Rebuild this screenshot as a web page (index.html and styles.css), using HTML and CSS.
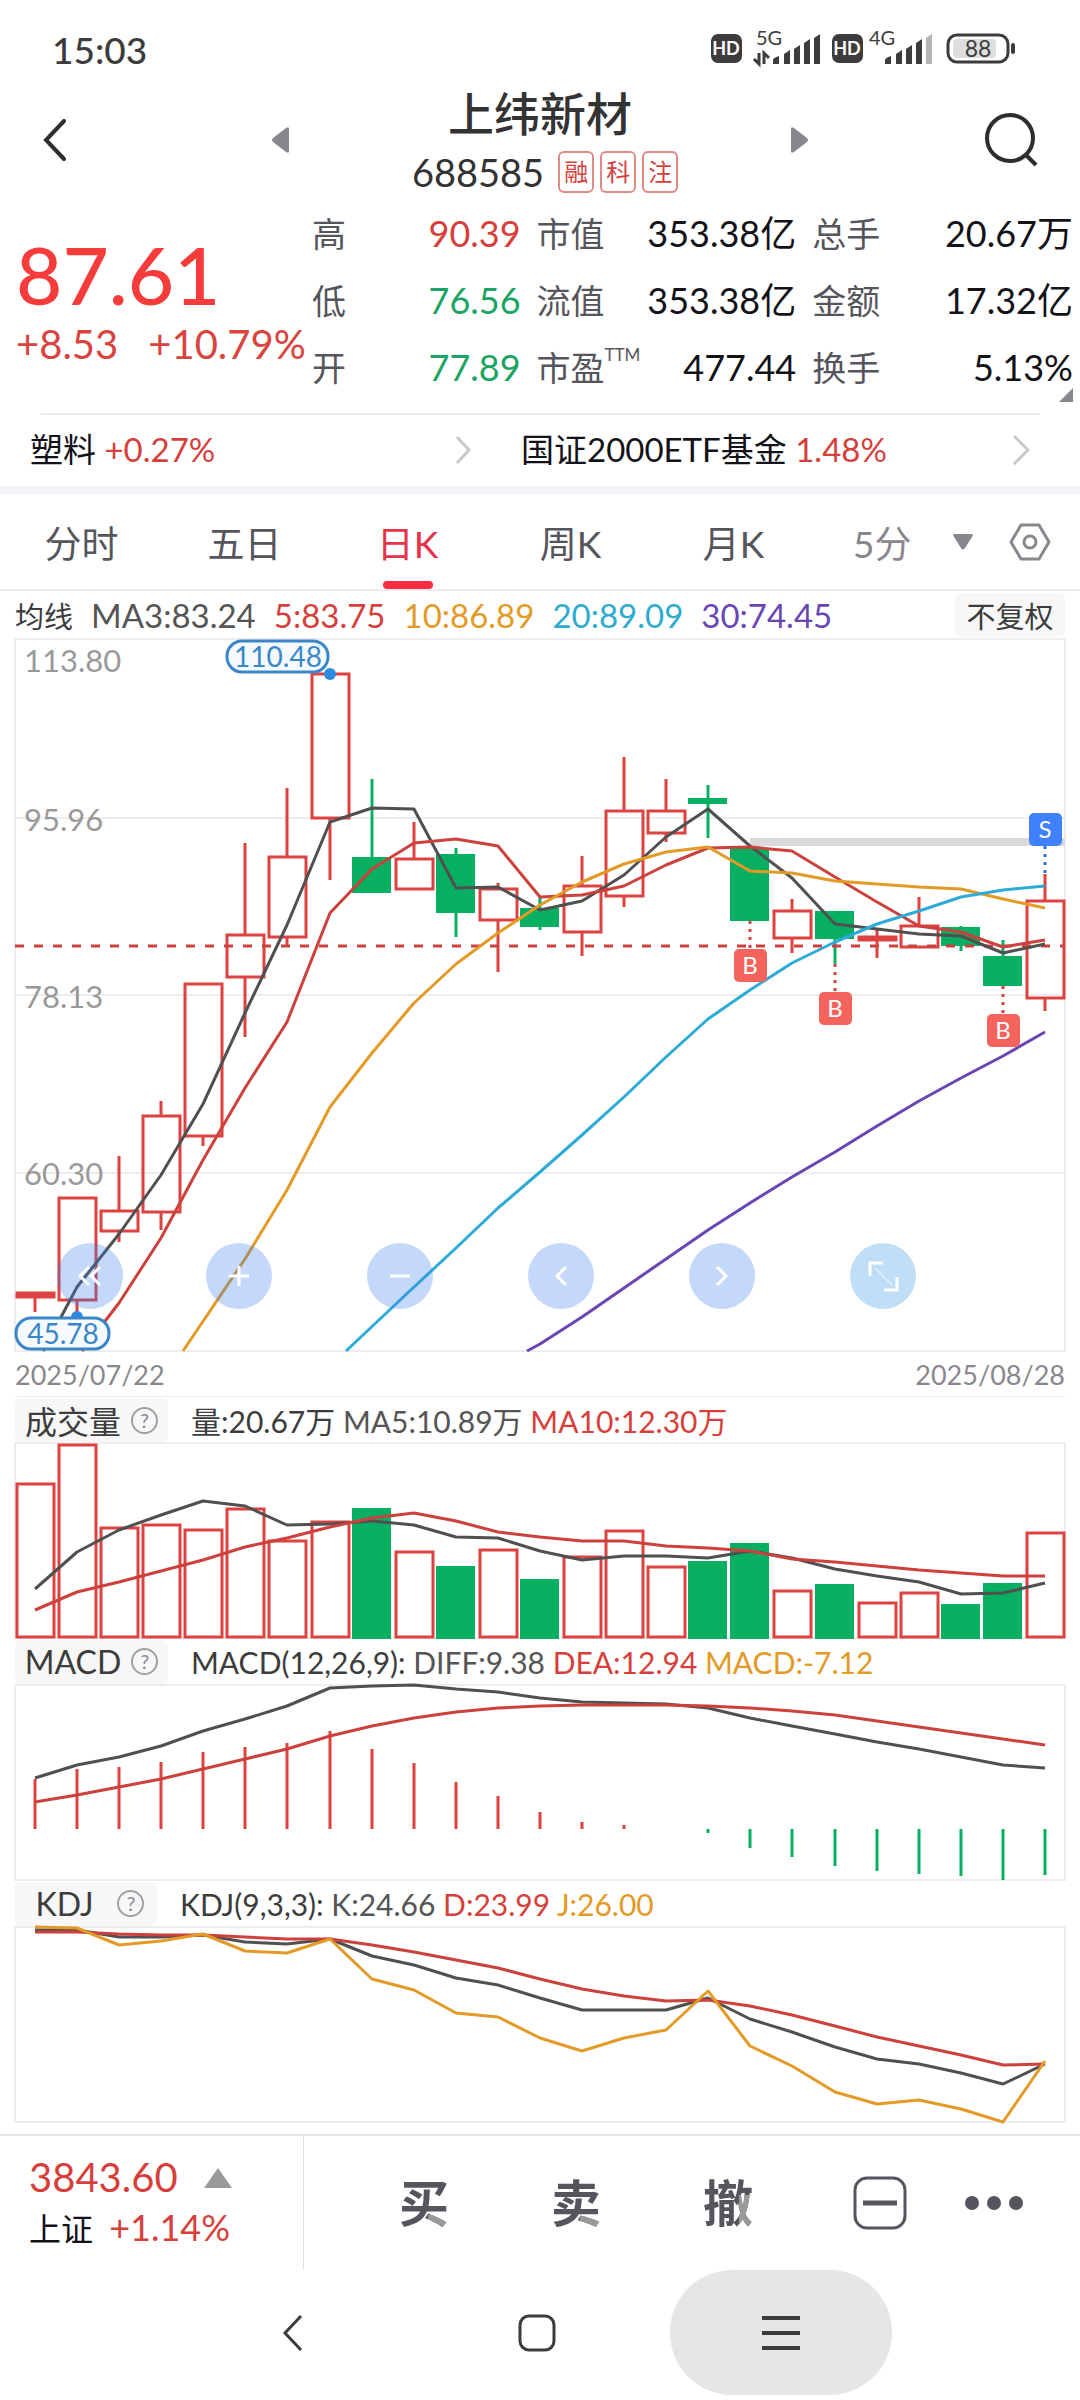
FILE: index.html
```html
<!DOCTYPE html>
<html lang="zh-CN">
<head>
<meta charset="utf-8">
<meta name="viewport" content="width=device-width, initial-scale=1">
<title>上纬新材 688585</title>
<link rel="stylesheet" href="styles.css">
</head>
<body>
<div class="status">
  <span class="clock">15:03</span>
  <svg class="status-icons" width="306" height="46" viewBox="0 0 306 46" aria-hidden="true">
    <g fill="#3c3c3c">
      <rect x="1" y="8" width="31" height="29" rx="7"/>
      <rect x="122" y="8" width="31" height="29" rx="7"/>
    </g>
    <g class="hd"><text x="16" y="29">HD</text><text x="137" y="29">HD</text></g>
    <g class="net"><text x="46" y="19">5G</text><text x="159" y="19">4G</text></g>
    <g fill="none" stroke="#3c3c3c" stroke-width="3"><path d="M49 27v11l-5-5M54 38V27l5 5"/></g>
    <g fill="#3c3c3c">
      <path d="M63 34q0-2 6-4v8h-6zM74 28l6-4v14h-6zM84 23l6-4v19h-6zM94 17l6-4v25h-6zM104 12l6-4v30h-6z"/>
      <path d="M175 34q0-2 6-4v8h-6zM186 28l6-4v14h-6zM196 23l6-4v19h-6zM206 17l6-4v25h-6z"/>
      <path d="M216 12l6-4v30h-6z" fill="#b4b4b4"/>
    </g>
    <rect x="238" y="9" width="60" height="27" rx="9" fill="none" stroke="#3c3c3c" stroke-width="3"/>
    <rect x="243" y="13" width="43" height="19" rx="4" fill="#dedede"/>
    <path d="M303 19v7" stroke="#3c3c3c" stroke-width="4" stroke-linecap="round"/>
    <text class="batt" x="268" y="31">88</text>
  </svg>
</div>

<header class="header">
  <button class="icon-btn back" aria-label="返回"><svg width="26" height="42" viewBox="0 0 26 42"><path d="M22 2L4 21l18 19" fill="none" stroke="#2e2e2e" stroke-width="4" stroke-linecap="round"/></svg></button>
  <button class="icon-btn step" aria-label="上一只"><svg width="18" height="26" viewBox="0 0 18 26"><path d="M18 2v22q0 3-3 1L2 15q-2-2 0-4L15 1q3-2 3 1z" fill="#88878e"/></svg></button>
  <div class="title">
    <h1>上纬新材</h1>
    <div class="code"><span>688585</span><i class="tag">融</i><i class="tag">科</i><i class="tag">注</i></div>
  </div>
  <button class="icon-btn step" aria-label="下一只"><svg width="18" height="26" viewBox="0 0 18 26"><path d="M0 2v22q0 3 3 1L16 15q2-2 0-4L3 1Q0-1 0 2z" fill="#88878e"/></svg></button>
  <button class="icon-btn search" aria-label="搜索"><svg width="54" height="56" viewBox="0 0 54 56"><g fill="none" stroke="#2e2e2e" stroke-width="4"><circle cx="26" cy="26" r="23"/><path d="M41 42l11 11"/></g></svg></button>
</header>

<section class="quote">
  <div class="price">
    <strong>87.61</strong>
    <p><span>+8.53</span><span>+10.79%</span></p>
  </div>
  <dl class="stats">
    <div><dt>高</dt><dd class="up">90.39</dd></div>
    <div><dt>市值</dt><dd>353.38亿</dd></div>
    <div><dt>总手</dt><dd>20.67万</dd></div>
    <div><dt>低</dt><dd class="down">76.56</dd></div>
    <div><dt>流值</dt><dd>353.38亿</dd></div>
    <div><dt>金额</dt><dd>17.32亿</dd></div>
    <div><dt>开</dt><dd class="down">77.89</dd></div>
    <div><dt>市盈<sup>TTM</sup></dt><dd>477.44</dd></div>
    <div><dt>换手</dt><dd>5.13%</dd></div>
  </dl>
  <span class="corner"></span>
</section>

<nav class="related">
  <a href="#"><span>塑料 <b>+0.27%</b></span><svg width="18" height="30" viewBox="0 0 18 30"><path d="M3 2l12 13L3 28" fill="none" stroke="#c8c8cc" stroke-width="3"/></svg></a>
  <a href="#"><span>国证2000ETF基金 <b>1.48%</b></span><svg width="18" height="30" viewBox="0 0 18 30"><path d="M2 1l14 14L2 29" fill="none" stroke="#c8c8cc" stroke-width="3"/></svg></a>
</nav>

<nav class="tabs">
  <button>分时</button>
  <button>五日</button>
  <button class="active">日K</button>
  <button>周K</button>
  <button>月K</button>
  <div class="tabs-more">
    <button class="muted">5分 <svg width="20" height="16" viewBox="0 0 20 16"><path d="M2 0h16q3 0 1 3l-7 11q-2 3-4 0L1 3Q-1 0 2 0z" fill="#88878e"/></svg></button>
    <button aria-label="设置"><svg width="42" height="38" viewBox="0 0 42 38"><g fill="none" stroke="#88878e" stroke-width="3"><path d="M12 2h18l10 17-10 17H12L2 19z" stroke-linejoin="round"/><circle cx="21" cy="19" r="6"/></g></svg></button>
  </div>
</nav>

<main class="charts">
  <div class="ma-row">
    <span class="name">均线</span>
    <span class="dark">MA3:83.24</span>
    <span class="red">5:83.75</span>
    <span class="orange">10:86.89</span>
    <span class="cyan">20:89.09</span>
    <span class="purple">30:74.45</span>
    <button class="adjust">不复权</button>
  </div>

  <div class="price-chart">
    <svg id="kline" class="plot" viewBox="0 639 1050 712"></svg>
    <div class="tools">
      <button aria-label="最左"><svg viewBox="0 0 66 66"><path d="M32 24l-9 9 9 9M43 24l-9 9 9 9"/></svg></button>
      <button aria-label="放大"><svg viewBox="0 0 66 66"><path d="M23 33h20M33 23v20"/></svg></button>
      <button aria-label="缩小"><svg viewBox="0 0 66 66"><path d="M23 33h20"/></svg></button>
      <button aria-label="左移"><svg viewBox="0 0 66 66"><path d="M38 24l-9 9 9 9"/></svg></button>
      <button aria-label="右移"><svg viewBox="0 0 66 66"><path d="M28 24l9 9-9 9"/></svg></button>
      <button class="full" aria-label="全屏"><svg viewBox="0 0 66 66"><path d="M20 33V20h13M47 34v13H34"/><path class="thin" d="M25 25l17 17"/></svg></button>
    </div>
  </div>
  <div class="dates"><time>2025/07/22</time><time>2025/08/28</time></div>

  <div class="ind first">
    <button class="ind-name">成交量 <span class="help">?</span></button>
    <p><span class="ink">量:20.67万</span> <span class="dark">MA5:10.89万</span> <span class="red">MA10:12.30万</span></p>
  </div>
  <svg id="volume" class="plot" viewBox="0 1443 1050 195"></svg>

  <div class="ind">
    <button class="ind-name">MACD <span class="help">?</span></button>
    <p><span class="ink">MACD(12,26,9):</span> <span class="dark">DIFF:9.38</span> <span class="red">DEA:12.94</span> <span class="orange">MACD:-7.12</span></p>
  </div>
  <svg id="macd" class="plot" viewBox="0 1685 1050 195"></svg>

  <div class="ind">
    <button class="ind-name kdj">KDJ <span class="help">?</span></button>
    <p><span class="ink">KDJ(9,3,3):</span> <span class="dark">K:24.66</span> <span class="red">D:23.99</span> <span class="orange">J:26.00</span></p>
  </div>
  <svg id="kdj" class="plot" viewBox="0 1927 1050 195"></svg>
</main>

<footer class="trade">
  <a class="index" href="#">
    <span class="index-value">3843.60 <svg width="28" height="20" viewBox="0 0 28 20"><path d="M14 0l14 20H0z" fill="#999"/></svg></span>
    <span class="index-name">上证 <b>+1.14%</b></span>
  </a>
  <div class="actions">
    <button><span class="glyph">买</span></button>
    <button><span class="glyph">卖</span></button>
    <button><span class="glyph side">撤</span></button>
    <button aria-label="收起"><svg width="54" height="54" viewBox="0 0 54 54"><rect x="2" y="2" width="50" height="50" rx="12" fill="none" stroke="#55555e" stroke-width="3"/><path d="M10 27h34" stroke="#55555e" stroke-width="5"/></svg></button>
    <button aria-label="更多"><svg width="60" height="16" viewBox="0 0 60 16"><g fill="#55555e"><circle cx="8" cy="8" r="7"/><circle cx="30" cy="8" r="7"/><circle cx="52" cy="8" r="7"/></g></svg></button>
  </div>
</footer>

<nav class="sysnav">
  <button aria-label="后退"><svg width="22" height="38" viewBox="0 0 22 38"><path d="M19 2L3 19l16 17" fill="none" stroke="#3c3c3c" stroke-width="3"/></svg></button>
  <button aria-label="主屏"><svg width="38" height="38" viewBox="0 0 38 38"><rect x="2" y="2" width="34" height="34" rx="9" fill="none" stroke="#3c3c3c" stroke-width="3"/></svg></button>
  <button class="pressed" aria-label="最近任务"><svg width="38" height="36" viewBox="0 0 38 36"><path d="M0 3h38M0 18h38M0 33h38" stroke="#3c3c3c" stroke-width="4"/></svg></button>
</nav>
<script src="charts.js"></script>
</body>
</html>
```
FILE: styles.css
```css
* { box-sizing: border-box; }
body {
  margin: 0;
  background: #fff;
  color: #121218;
  font-family: Lato, "Noto Sans CJK SC", sans-serif;
}
button {
  border: 0;
  padding: 0;
  background: none;
  color: inherit;
  font: inherit;
  display: flex;
  align-items: center;
  justify-content: center;
}
a { color: inherit; text-decoration: none; }
b, i { font-weight: 400; font-style: normal; }
p, dl, dd, h1 { margin: 0; }
svg { flex: none; }

.up, .red, b { color: #d63f3b; }
.down { color: #1ba464; }
.ink { color: #3c3c3c; }
.dark { color: #555; }
.orange { color: #e39a26; }
.cyan { color: #2dabd0; }
.purple { color: #6a45b4; }

/* status bar */
.status {
  height: 80px;
  padding: 18px 64px 0 52px;
  display: flex;
  align-items: center;
  justify-content: space-between;
}
.clock { font-size: 37px; color: #3c3c3c; font-weight: 500; }
.hd { fill: #fff; font-size: 18px; font-weight: 700; text-anchor: middle; }
.net { fill: #3c3c3c; font-size: 20px; }
.batt { fill: #3c3c3c; font-size: 23px; text-anchor: middle; }

/* header */
.header {
  height: 120px;
  display: grid;
  grid-template-columns: 190fr 180fr 340fr 180fr 190fr;
  align-items: center;
}
.back { justify-content: flex-start; padding-left: 42px; }
.search { justify-content: flex-end; padding-right: 42px; }
.title { text-align: center; color: #333; }
.title h1 { font-size: 46px; line-height: 64px; font-weight: 500; }
.code { display: flex; justify-content: center; align-items: center; gap: 6px; font-size: 38px; line-height: 52px; padding-left: 10px; }
.code span { margin-right: 8px; }
.tag { width: 36px; height: 42px; border: 2px solid #e08a88; border-radius: 6px; color: #d63f3b; font-size: 24px; line-height: 38px; }

/* quote */
.quote { position: relative; display: grid; grid-template-columns: 314fr 766fr; padding: 0 7px 12px 0; }
.price { padding: 32px 0 0 16px; color: #f63c3a; }
.price strong { display: block; font-size: 80px; line-height: 84px; font-weight: 500; }
.price p { display: flex; gap: 30px; font-size: 40px; line-height: 56px; color: #d9443f; white-space: nowrap; }
.stats { display: grid; grid-template-columns: 208fr 259fr 260fr; column-gap: 16px; }
.stats div { display: flex; justify-content: space-between; align-items: center; height: 67px; font-size: 36px; line-height: 67px; white-space: nowrap; }
.stats dt { color: #55555c; font-size: 34px; }
.stats sup { font-size: 17px; line-height: 20px; vertical-align: 20px; }
.corner { position: absolute; right: 7px; bottom: 11px; border: 7px solid #88878e; border-top-color: transparent; border-left-color: transparent; }

.related { display: grid; grid-template-columns: 488fr 512fr; margin: 0 50px 0 30px; position: relative; font-size: 33px; line-height: 73px; }
.related::before { content: ""; position: absolute; inset: 0 -10px auto 11px; border-top: 2px solid #ededf0; }
.related a { display: flex; justify-content: space-between; align-items: center; }
.related a:first-child { padding-right: 46px; }
.related a:last-child { padding-left: 3px; }

/* period tabs */
.tabs { display: grid; grid-template-columns: repeat(5, 163fr) 265fr; height: 105px; border-top: 8px solid #f2f2f7; border-bottom: 2px solid #ededf0; font-size: 37px; color: #55555c; }
.tabs .active { position: relative; color: #e4334a; }
.active::after { content: ""; position: absolute; left: 50%; bottom: 0; width: 50px; height: 8px; margin-left: -25px; border-radius: 4px; background: #fa2b42; }
.tabs-more { display: flex; justify-content: space-between; padding: 0 29px 0 38px; }
.tabs-more .muted { gap: 42px; color: #88878e; }

/* charts */
.charts { padding: 0 15px 12px; }
.ma-row { display: flex; align-items: center; gap: 18px; height: 48px; font-size: 33px; white-space: nowrap; }
.name { font-size: 29px; color: #3c3c3c; }
.adjust { margin-left: auto; width: 110px; height: 44px; border-radius: 6px; background: #f7f7f7; color: #3c3c3c; font-size: 29px; }
.price-chart { position: relative; }
.plot { display: block; width: 100%; height: auto; overflow: visible; }
.tools { position: absolute; left: 4%; right: 14%; bottom: 42px; display: grid; grid-template-columns: 149fr 160fr 161fr 161fr 160fr 68fr; }
.tools button { width: 66px; height: 66px; border-radius: 50%; background: rgba(59, 130, 235, 0.3); }
.tools svg { width: 66px; fill: none; stroke: #fff; stroke-width: 3; }
.tools .full { background: rgba(45, 150, 225, 0.3); }
.tools .thin { stroke-width: 1; }
.dates { display: flex; justify-content: space-between; height: 45px; font-size: 27px; line-height: 48px; color: #88888c; }
.ind { display: flex; align-items: center; height: 47px; font-size: 30px; white-space: nowrap; }
.first { border-top: 1px solid #ededf0; }
.ind p { padding-left: 23px; }
.ind-name { width: 153px; height: 44px; gap: 10px; border-radius: 6px; background: #f7f7f7; color: #3c3c3c; font-size: 32px; }
.ind-name.kdj { width: 142px; gap: 24px; padding-left: 8px; }
.help { width: 27px; height: 27px; border: 2px solid #a0a0a4; border-radius: 50%; color: #88878e; font-size: 20px; line-height: 23px; }

.axis text { fill: #999; font-size: 31px; }
.pill text { fill: #3a86c8; font-size: 28px; text-anchor: middle; }
.mark text { fill: #fff; font-size: 24px; text-anchor: middle; }

/* trade bar */
.trade { display: grid; grid-template-columns: 304fr 776fr; height: 136px; border-top: 2px solid #e6e6e6; }
.index { display: flex; flex-direction: column; justify-content: center; padding-left: 29px; border-right: 1px solid #e0e0e0; }
.index-value { font-size: 40px; line-height: 50px; color: #d63f3b; }
.index-value svg { margin-left: 16px; vertical-align: 4px; }
.index-name { font-size: 32px; line-height: 50px; }
.index-name b { margin-left: 8px; font-size: 36px; }
.actions { display: grid; grid-template-columns: repeat(4, 152fr) 76fr; padding: 0 48px 0 44px; }
.glyph {
  font-size: 50px; line-height: 50px; font-weight: 700; color: transparent;
  background: linear-gradient(#999, #999) 100% 100% / 42% 26% no-repeat, #55555e;
  background-clip: text; -webkit-background-clip: text;
}
.glyph.side { background-size: 28% 66%, auto; }

/* system navigation */
.sysnav { display: grid; grid-template-columns: repeat(3, 1fr); height: 130px; padding: 0 177px 5px 171px; }
.sysnav button { margin: 0 11px; }
.pressed { border-radius: 62px; background: #e6e6e6; }
```
FILE: charts.js
```js
const NS = 'http://www.w3.org/2000/svg';
const RED = '#dc4340', GREEN = '#06af62', DARK = '#505050';
const LINE_RED = '#cd413c', ORANGE = '#e39a26', CYAN = '#2dabd6', PURPLE = '#6a45b4';
const cx = i => Math.round(20 + i * 42.08);

function add(parent, name, attrs, text) {
  const e = document.createElementNS(NS, name);
  for (const k in attrs) e.setAttribute(k, attrs[k]);
  if (text) e.textContent = text;
  parent.appendChild(e);
  return e;
}
function frame(svg, top, bottom, grid = []) {
  add(svg, 'rect', { x: 0, y: top, width: 1050, height: bottom - top, fill: '#fff', stroke: '#ededed', 'stroke-width': 2 });
  for (const y of grid) add(svg, 'path', { d: `M0 ${y}H1050`, stroke: '#ededed', 'stroke-width': 2 });
}
function line(svg, points, color) {
  add(svg, 'polyline', { points: points.map(p => p.join()).join(' '), fill: 'none', stroke: color, 'stroke-width': 3, 'stroke-linejoin': 'round' });
}
const series = (ys, from = 0) => ys.map((y, i) => [cx(i + from), y]);

// kind, body top, body bottom, wick top, wick bottom
const candles = [
  ['r', 1293, 1297, 1293, 1312], ['r', 1198, 1300, 1198, 1317], ['r', 1211, 1231, 1156, 1242],
  ['r', 1116, 1212, 1101, 1230], ['r', 984, 1136, 984, 1146], ['r', 935, 977, 843, 1037],
  ['r', 857, 937, 788, 945], ['r', 674, 818, 674, 880], ['g', 857, 893, 779, 893],
  ['r', 859, 889, 822, 889], ['g', 854, 913, 848, 937], ['r', 889, 920, 883, 972],
  ['g', 908, 927, 897, 930], ['r', 886, 932, 856, 956], ['r', 811, 896, 757, 907],
  ['r', 811, 833, 779, 842], ['g', 798, 804, 785, 838], ['g', 848, 921, 848, 921],
  ['r', 911, 938, 899, 953], ['g', 911, 939, 911, 964], ['r', 937, 940, 930, 958],
  ['r', 926, 947, 897, 947], ['g', 927, 946, 926, 951], ['g', 956, 986, 940, 986],
  ['r', 901, 998, 874, 1011]
];
const k = document.getElementById('kline');
frame(k, 639, 1351, [818, 995, 1173]);
const axis = add(k, 'g', { class: 'axis' });
[['113.80', 672], ['95.96', 831], ['78.13', 1008], ['60.30', 1185]].forEach(([t, y]) => add(axis, 'text', { x: 9, y }, t));
add(k, 'rect', { x: 735, y: 838, width: 315, height: 8, fill: '#d9d9d9' });
candles.forEach(([kind, top, bottom, high, low], i) => {
  const x = cx(i), c = kind === 'r' ? RED : GREEN;
  const doji = kind === 'r' && bottom - top < 6;
  add(k, 'path', { d: `M${x} ${high}V${top}M${x} ${bottom}V${low}`, stroke: c, 'stroke-width': 3 });
  if (kind === 'r') add(k, 'rect', { x: x - 18, y: top, width: 37, height: bottom - top, fill: doji ? c : 'none', stroke: c, 'stroke-width': 3 });
  else add(k, 'rect', { x: x - 20, y: top, width: 39, height: bottom - top, fill: c });
});
add(k, 'path', { d: 'M0 946H1050', stroke: LINE_RED, 'stroke-width': 3, 'stroke-dasharray': '9 10' });
line(k, [[28, 1351], ...series([1287, 1234, 1175, 1104, 1013, 925, 822, 808, 809, 888, 887, 910, 901, 875, 837, 809, 846, 878, 924, 929, 934, 936, 953, 944], 1)], DARK);
line(k, [[67, 1351], ...series([1303, 1238, 1160, 1088, 1022, 913, 869, 843, 839, 846, 897, 895, 886, 865, 848, 847, 851, 877, 902, 926, 932, 947, 940], 2)], LINE_RED);
line(k, [[168, 1351], ...series([1259, 1190, 1107, 1053, 1003, 964, 933, 905, 882, 864, 852, 847, 871, 873, 881, 884, 887, 889, 899, 908], 5)], ORANGE);
line(k, [[331, 1351], ...series([1287, 1248, 1208, 1172, 1135, 1097, 1057, 1019, 990, 963, 942, 924, 911, 897, 890, 886], 9)], CYAN);
line(k, [[512, 1351], ...series([1344, 1317, 1288, 1259, 1230, 1203, 1177, 1152, 1126, 1101, 1078, 1056, 1032], 12)], PURPLE);

const mark = add(k, 'g', { class: 'mark' });
[[17, 949, 'B', 921, 949], [19, 992, 'B', 964, 992], [23, 1014, 'B', 986, 1014], [24, 813, 'S', 846, 874]].forEach(([i, y, t, a, b]) => {
  const x = cx(i), c = t === 'B' ? '#f4645c' : '#3f80fb';
  add(mark, 'path', { d: `M${x} ${a}V${b}`, stroke: t === 'B' ? RED : '#2f6fe0', 'stroke-width': 3, 'stroke-dasharray': '3 5' });
  add(mark, 'rect', { x: x - 16, y, width: 33, height: 33, rx: 5, fill: c });
  add(mark, 'text', { x, y: y + 25 }, t);
});
const pill = add(k, 'g', { class: 'pill' });
add(pill, 'circle', { cx: cx(7), cy: 674, r: 6, fill: '#2c8ae0' });
add(pill, 'circle', { cx: cx(1), cy: 1317, r: 6, fill: '#2c8ae0' });
[[212, 641, 101, '110.48'], [1, 1318, 93, '45.78']].forEach(([x, y, w, t]) => {
  add(pill, 'rect', { x, y, width: w, height: 31, rx: 15, fill: '#f4fafd', stroke: '#3a86c8', 'stroke-width': 3 });
  add(pill, 'text', { x: x + Math.round(w / 2), y: y + 26 }, t);
});

const v = document.getElementById('volume');
frame(v, 1443, 1638);
[1484, 1445, 1528, 1525, 1530, 1509, 1541, 1522, 1508, 1552, 1566, 1550, 1579, 1557, 1531, 1567, 1561, 1543, 1591, 1584, 1603, 1593, 1604, 1583, 1533].forEach((y, i) => {
  const x = cx(i);
  if ([8, 10, 12, 16, 17, 19, 22, 23].includes(i)) add(v, 'rect', { x: x - 20, y, width: 39, height: 1639 - y, fill: GREEN });
  else add(v, 'rect', { x: x - 18, y, width: 37, height: 1637 - y, fill: 'none', stroke: RED, 'stroke-width': 3 });
});
line(v, series([1589, 1552, 1530, 1515, 1501, 1506, 1525, 1524, 1521, 1525, 1537, 1538, 1551, 1560, 1556, 1556, 1558, 1551, 1558, 1569, 1576, 1582, 1594, 1593, 1583]), DARK);
line(v, series([1610, 1592, 1582, 1571, 1560, 1547, 1538, 1527, 1518, 1513, 1521, 1532, 1537, 1541, 1541, 1546, 1548, 1551, 1559, 1562, 1566, 1570, 1573, 1576, 1576]), LINE_RED);

const m = document.getElementById('macd');
frame(m, 1685, 1880);
[1779, 1769, 1767, 1762, 1752, 1747, 1743, 1731, 1749, 1763, 1782, 1796, 1812, 1822, 1825, 1829, 1833, 1848, 1857, 1866, 1871, 1874, 1876, 1880, 1875].forEach((y, i) => {
  add(m, 'path', { d: `M${cx(i)} 1829V${y}`, stroke: y < 1829 ? RED : GREEN, 'stroke-width': 3 });
});
line(m, series([1778, 1765, 1757, 1746, 1731, 1719, 1706, 1688, 1686, 1685, 1689, 1692, 1698, 1702, 1703, 1704, 1708, 1718, 1726, 1734, 1742, 1749, 1757, 1765, 1768]), DARK);
line(m, series([1802, 1795, 1787, 1779, 1769, 1759, 1749, 1736, 1726, 1718, 1712, 1708, 1706, 1705, 1705, 1705, 1706, 1708, 1711, 1715, 1721, 1727, 1733, 1739, 1745]), LINE_RED);

const d = document.getElementById('kdj');
frame(d, 1927, 2122);
line(d, series([1930, 1930, 1937, 1937, 1935, 1942, 1944, 1939, 1956, 1965, 1978, 1985, 1998, 2010, 2010, 2010, 1998, 2019, 2032, 2047, 2059, 2064, 2073, 2084, 2064]), DARK);
line(d, series([1932, 1932, 1934, 1935, 1935, 1937, 1939, 1939, 1945, 1952, 1960, 1968, 1979, 1989, 1996, 2001, 2000, 2006, 2015, 2026, 2037, 2046, 2055, 2065, 2064]), LINE_RED);
line(d, series([1927, 1928, 1945, 1941, 1934, 1951, 1953, 1939, 1979, 1990, 2013, 2017, 2038, 2051, 2038, 2030, 1991, 2046, 2066, 2092, 2104, 2100, 2109, 2122, 2061]), ORANGE);
```
